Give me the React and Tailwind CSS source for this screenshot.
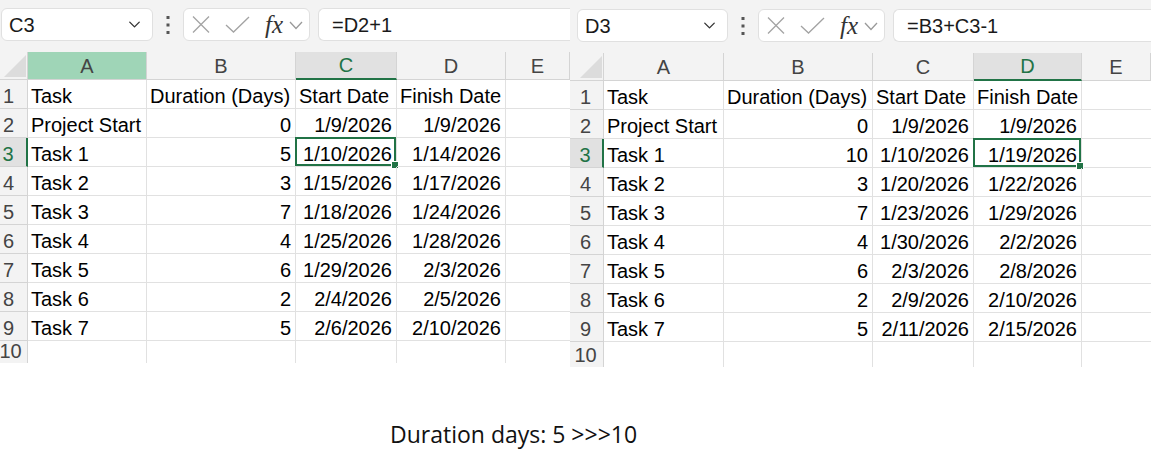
import React from 'react';
import { ChevronDown } from 'lucide-react';

const leftData = [
  ['Task', 'Duration (Days)', 'Start Date', 'Finish Date'],
  ['Project Start', '0', '1/9/2026', '1/9/2026'],
  ['Task 1', '5', '1/10/2026', '1/14/2026'],
  ['Task 2', '3', '1/15/2026', '1/17/2026'],
  ['Task 3', '7', '1/18/2026', '1/24/2026'],
  ['Task 4', '4', '1/25/2026', '1/28/2026'],
  ['Task 5', '6', '1/29/2026', '2/3/2026'],
  ['Task 6', '2', '2/4/2026', '2/5/2026'],
  ['Task 7', '5', '2/6/2026', '2/10/2026'],
];

const rightData = [
  ['Task', 'Duration (Days)', 'Start Date', 'Finish Date'],
  ['Project Start', '0', '1/9/2026', '1/9/2026'],
  ['Task 1', '10', '1/10/2026', '1/19/2026'],
  ['Task 2', '3', '1/20/2026', '1/22/2026'],
  ['Task 3', '7', '1/23/2026', '1/29/2026'],
  ['Task 4', '4', '1/30/2026', '2/2/2026'],
  ['Task 5', '6', '2/3/2026', '2/8/2026'],
  ['Task 6', '2', '2/9/2026', '2/10/2026'],
  ['Task 7', '5', '2/11/2026', '2/15/2026'],
];

// name box, ⋮, cancel/enter/fx box, formula bar
const Toolbar = ({ cell, formula, nameW, padTop }) => (
  <div className={`flex items-start bg-[#f3f3f3] ${padTop} h-full`}>
    <div className={`${nameW} h-[33px] bg-white border border-[#e0e0e0] rounded-[6px] flex items-center justify-between pl-[7px] pr-[8px]`}>
      <span className="text-[20px] text-[#1a1a1a]">{cell}</span>
      <ChevronDown size={19} strokeWidth={1.7} color="#333" />
    </div>
    <div className="w-[30px] h-[33px] flex items-center justify-center">
      <svg width="4" height="18" viewBox="0 0 4 18">
        <rect x="0.5" y="0" width="3" height="3" fill="#555" />
        <rect x="0.5" y="7.5" width="3" height="3" fill="#555" />
        <rect x="0.5" y="15" width="3" height="3" fill="#555" />
      </svg>
    </div>
    <div className="w-[127px] h-[33px] bg-white border border-[#e0e0e0] rounded-[6px] flex items-center">
      <svg width="18" height="17" viewBox="0 0 18 17" className="ml-[8px]">
        <path d="M1 0.5 17 16.5M17 0.5 1 16.5" stroke="#a3a3a3" strokeWidth="1.3" fill="none" />
      </svg>
      <svg width="25" height="17" viewBox="0 0 25 17" className="ml-[15px]">
        <path d="M1 9 8.5 16 24 1" stroke="#a3a3a3" strokeWidth="1.3" fill="none" />
      </svg>
      <span className="ml-[15px] italic text-[25px] leading-none text-[#333] font-['Liberation_Serif',serif]">fx</span>
      <svg width="14" height="9" viewBox="0 0 14 9" className="ml-[6px] mt-[2px]">
        <path d="M1 1 7 7.5 13 1" stroke="#9a9a9a" strokeWidth="1.3" fill="none" />
      </svg>
    </div>
    <div className="flex-1 ml-[8px] h-[33px] bg-white border border-[#e0e0e0] border-r-0 rounded-l-[6px] flex items-center pl-[13px]">
      <span className="text-[20px] text-[#1a1a1a]">{formula}</span>
    </div>
  </div>
);

const Corner = () => (
  <div className="bg-[#f3f3f3] border-r border-b border-[#d4d4d4] flex items-end justify-end pr-[1px] pb-[2px]">
    <svg width="22" height="22" viewBox="0 0 22 22">
      <polygon points="22,0 22,22 0,22" fill="#dcdcdc" />
    </svg>
  </div>
);

const Sheet = ({ cols, data, selCol, greenCol, rowHeadPad, lastPad, toolbarH, lastH, toolbar }) => {
  const letters = ['A', 'B', 'C', 'D', 'E'];
  return (
    <div className="flex flex-col">
      <div className={toolbarH}>{toolbar}</div>
      <div className={`grid ${cols}`}>
        <Corner />
        {letters.map((l, i) => {
          const sel = i === selCol;
          const green = i === greenCol;
          return (
            <div
              key={l}
              className={`h-[28px] flex items-center justify-center text-[20px] border-r border-[#d4d4d4] ${
                sel
                  ? 'bg-[#e1e1e1] text-[#217346] border-b-2 border-b-[#217346]'
                  : green
                  ? 'bg-[#9fd5b7] text-[#444] border-b border-b-[#d4d4d4]'
                  : 'bg-[#f3f3f3] text-[#444] border-b border-b-[#d4d4d4]'
              }`}
            >
              {l}
            </div>
          );
        })}
        {data.map((row, r) => (
          <React.Fragment key={r}>
            <div
              className={`h-[29px] flex items-end justify-center text-[20px] leading-[24px] border-b border-[#d4d4d4] ${rowHeadPad} ${
                r === 2
                  ? 'bg-[#e1e1e1] text-[#217346] border-r-2 border-r-[#217346]'
                  : 'bg-[#f3f3f3] text-[#444] border-r border-r-[#d4d4d4]'
              }`}
            >
              {r + 1}
            </div>
            {row.map((v, c) => {
              const num = r > 0 && c > 0;
              const sel = r === 2 && c === selCol;
              return (
                <div
                  key={c}
                  className={`relative h-[29px] flex items-end text-[20px] leading-[24px] text-black border-r border-b border-[#e1e1e1] whitespace-nowrap ${
                    num ? 'justify-end pr-[4px]' : 'justify-start pl-[3px]'
                  }`}
                >
                  {v}
                  {sel && (
                    <>
                      <div className="absolute -left-[1px] -top-[1px] right-0 bottom-0 border-2 border-[#217346]" />
                      <div className="absolute -right-[3px] -bottom-[3px] w-[6px] h-[6px] bg-[#217346] border border-white box-content" />
                    </>
                  )}
                </div>
              );
            })}
            <div className="h-[29px] border-b border-[#e1e1e1]" />
          </React.Fragment>
        ))}
        <div
          className={`${lastH} flex items-end justify-center text-[20px] leading-[24px] text-[#444] bg-[#f3f3f3] border-r border-[#d4d4d4] overflow-hidden ${lastPad}`}
        >
          10
        </div>
        <div className={`${lastH} border-r border-[#e1e1e1]`} />
        <div className={`${lastH} border-r border-[#e1e1e1]`} />
        <div className={`${lastH} border-r border-[#e1e1e1]`} />
        <div className={`${lastH} border-r border-[#e1e1e1]`} />
        <div className={lastH} />
      </div>
    </div>
  );
};

export default function App() {
  return (
    <div className="w-[1151px] h-[457px] bg-white overflow-hidden font-['Liberation_Sans',Arial,sans-serif]">
      <div className="flex items-start">
        <div className="w-[570px] shrink-0">
          <Sheet
            cols="grid-cols-[28px_119px_149px_101px_109px_64px]"
            data={leftData}
            selCol={2}
            greenCol={0}
            rowHeadPad="pr-[10px]"
            lastPad="pr-[6px]"
            toolbarH="h-[52px]"
            lastH="h-[22px]"
            toolbar={<Toolbar cell="C3" formula="=D2+1" nameW="w-[152px] ml-[1px]" padTop="pt-[8px]" />}
          />
        </div>
        <div className="flex-1">
          <Sheet
            cols="grid-cols-[34px_120px_149px_101px_108px_69px]"
            data={rightData}
            selCol={3}
            greenCol={-1}
            rowHeadPad="pr-[2px]"
            lastPad="pr-[2px]"
            toolbarH="h-[53px]"
            lastH="h-[25px]"
            toolbar={<Toolbar cell="D3" formula="=B3+C3-1" nameW="w-[151px] ml-[7px]" padTop="pt-[9px]" />}
          />
        </div>
      </div>
      <div className="mt-[51px] pl-[390px] text-[23px] leading-[32px] text-[#111] font-['Open_Sans',sans-serif]">
        Duration days: 5 &gt;&gt;&gt;10
      </div>
    </div>
  );
}
